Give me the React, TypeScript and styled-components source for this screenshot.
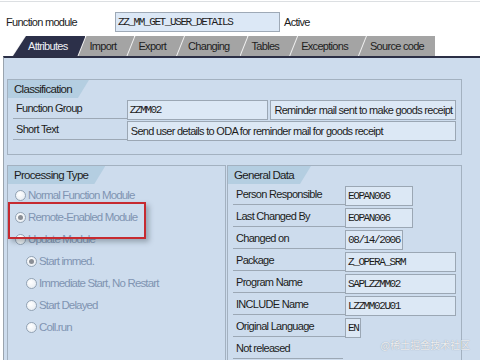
import React from "react";
import styled, { createGlobalStyle } from "styled-components";

const Global = createGlobalStyle`
  html, body { margin: 0; padding: 0; background: #ffffff; }
  body {
    font-family: "Liberation Sans", Arial, sans-serif;
    font-size: 11px;
    letter-spacing: -0.7px;
    color: #1c1c1c;
  }
  * { box-sizing: border-box; }
`;

const Page = styled.div`
  position: relative;
  width: 480px;
  height: 360px;
  overflow: hidden;
  background: #ffffff;
  display: flex;
  flex-direction: column;
`;

const TopBar = styled.div`
  margin-top: 1px;
  border-top: 1px solid #dcdfe2;
  padding: 10px 0 4px 6px;
  display: flex;
  align-items: center;
`;

const TopLabel = styled.div`
  width: 109px;
  line-height: 20px;
`;

const TopInput = styled.div`
  width: 165px;
  height: 20px;
  border: 1px solid #9ea9b6;
  background: #dce8f6;
  padding-left: 2px;
  font-family: "Liberation Mono", "DejaVu Sans Mono", monospace;
  font-size: 11px;
  letter-spacing: -1.4px;
  line-height: 18px;
`;

const Status = styled.div`
  margin-left: 4px;
`;

const TabStrip = styled.div`
  display: flex;
  height: 20px;
  padding-left: 12px;
`;

const TabOuter = styled.div<{ $slant: number; $first?: boolean }>`
  position: relative;
  height: 20px;
  margin-left: ${(p) => (p.$first ? 0 : -8)}px;
  background: #f4f4f4;
  clip-path: polygon(${(p) => p.$slant}px 0, 100% 0, 100% 100%, 0 100%);
`;

const TabFace = styled.div<{ $slant: number; $active?: boolean; $last?: boolean }>`
  height: 100%;
  display: flex;
  align-items: center;
  padding: 0 ${(p) => (p.$last ? 11 : 18)}px 0 ${(p) => (p.$active ? 16 : 12)}px;
  background: ${(p) => (p.$active ? "#2c3049" : "#a4a4a4")};
  color: ${(p) => (p.$active ? "#eef0f5" : "#1e1e1e")};
  clip-path: polygon(${(p) => p.$slant + 1}px 0, 100% 0, 100% 100%, 1px 100%);
  white-space: nowrap;
`;

const Panel = styled.div`
  flex: 1;
  margin-left: 3px;
  border-top: 2px solid #2b2f46;
  border-left: 1px solid #9aa4ae;
  background: #cddced;
  padding: 21px 0 0 3px;
  display: flex;
  flex-direction: column;
`;

const Box = styled.div<{ $width: number; $grow?: boolean }>`
  position: relative;
  width: ${(p) => p.$width}px;
  border: 1px solid #a3b1c0;
  display: flex;
  flex-direction: column;
  ${(p) => (p.$grow ? "height: 220px;" : "")}
`;

const BoxHeader = styled.div`
  align-self: flex-start;
  height: 18px;
  line-height: 18px;
  padding: 0 17px 0 6px;
  background: #b4cee1;
  clip-path: polygon(0 0, 100% 0, calc(100% - 11px) 100%, 0 100%);
  white-space: nowrap;
  font-size: 11.5px;
`;

const ClassBody = styled.div`
  padding: 1px 5px 13px 5px;
  display: flex;
  flex-direction: column;
`;

const FormRow = styled.div`
  display: flex;
  align-items: flex-start;
  height: 21px;
`;

const GDRow = styled(FormRow)`
  height: 22px;
`;

const LabelCell = styled.div<{ $w: number }>`
  width: ${(p) => p.$w}px;
  height: 20px;
  line-height: 19px;
  padding-left: 3px;
  border-bottom: 1px solid #9ca8b5;
  white-space: nowrap;
`;

const Field = styled.div<{ $w: number; $mono?: boolean; $gap?: number }>`
  width: ${(p) => p.$w}px;
  height: 20px;
  margin-top: 1px;
  margin-left: ${(p) => p.$gap ?? 0}px;
  border: 1px solid #9ba7b4;
  background: #dce8f5;
  padding-left: ${(p) => (p.$mono ? 2 : 3)}px;
  line-height: 18px;
  white-space: nowrap;
  overflow: hidden;
  ${(p) =>
    p.$mono
      ? `font-family: "Liberation Mono", "DejaVu Sans Mono", monospace; font-size: 11px; letter-spacing: -1.4px;`
      : ""}
`;

const Lower = styled.div`
  display: flex;
  gap: 1px;
  margin-top: 10px;
`;

const RadioList = styled.div`
  display: flex;
  flex-direction: column;
  padding-left: 7px;
`;

const RadioRow = styled.div<{ $indent?: boolean }>`
  display: flex;
  align-items: center;
  height: 22px;
  padding-left: ${(p) => (p.$indent ? 11 : 0)}px;
  color: #8094b2;
  white-space: nowrap;
  font-size: 11.5px;
  letter-spacing: -0.85px;
`;

const RadioCircle = styled.span<{ $checked?: boolean }>`
  width: 11px;
  height: 11px;
  border-radius: 50%;
  border: 1px solid #93a3b4;
  background: radial-gradient(circle at 40% 35%, #ffffff, #e2e8ef);
  margin-right: 2px;
  display: flex;
  align-items: center;
  justify-content: center;
  &::after {
    content: "";
    width: 5px;
    height: 5px;
    border-radius: 50%;
    background: ${(p) => (p.$checked ? "#8b8f96" : "transparent")};
  }
`;

const Highlight = styled.div`
  position: absolute;
  left: 0;
  top: 36px;
  width: 138px;
  height: 37px;
  border: 2px solid #c62a30;
  box-shadow: 3px 3px 5px rgba(50, 60, 70, 0.35);
  pointer-events: none;
`;

const GDBody = styled.div`
  padding: 1px 0 0 5px;
  display: flex;
  flex-direction: column;
`;

const Watermark = styled.div`
  position: absolute;
  right: 10px;
  bottom: 8px;
  font-family: "Noto Sans CJK SC", "Noto Sans", sans-serif;
  font-size: 10px;
  letter-spacing: 0;
  color: rgba(255, 255, 255, 0.85);
  text-shadow: 0 0 1px rgba(0, 0, 0, 0.35);
  white-space: nowrap;
`;

const tabs = ["Attributes", "Import", "Export", "Changing", "Tables", "Exceptions", "Source code"];

const radios: { label: string; checked?: boolean; indent?: boolean }[] = [
  { label: "Normal Function Module" },
  { label: "Remote-Enabled Module", checked: true },
  { label: "Update Module" },
  { label: "Start immed.", checked: true, indent: true },
  { label: "Immediate Start, No Restart", indent: true },
  { label: "Start Delayed", indent: true },
  { label: "Coll.run", indent: true },
];

const general: { label: string; value?: string; w?: number }[] = [
  { label: "Person Responsible", value: "EOPAN006", w: 68 },
  { label: "Last Changed By", value: "EOPAN006", w: 68 },
  { label: "Changed on", value: "08/14/2006", w: 58 },
  { label: "Package", value: "Z_OPERA_SRM", w: 111 },
  { label: "Program Name", value: "SAPLZZMM02", w: 111 },
  { label: "INCLUDE Name", value: "LZZMM02U01", w: 111 },
  { label: "Original Language", value: "EN", w: 16 },
  { label: "Not released" },
];

export default function App() {
  return (
    <Page>
      <Global />
      <TopBar>
        <TopLabel>Function module</TopLabel>
        <TopInput>ZZ_MM_GET_USER_DETAILS</TopInput>
        <Status>Active</Status>
      </TopBar>
      <TabStrip>
        {tabs.map((t, i) => {
          const active = i === 0;
          const slant = active ? 13 : 8;
          return (
            <TabOuter key={t} $slant={slant} $first={i === 0}>
              <TabFace $slant={slant} $active={active} $last={i === tabs.length - 1}>
                {t}
              </TabFace>
            </TabOuter>
          );
        })}
      </TabStrip>
      <Panel>
        <Box $width={455}>
          <BoxHeader>Classification</BoxHeader>
          <ClassBody>
            <FormRow>
              <LabelCell $w={114}>Function Group</LabelCell>
              <Field $w={142} $mono>
                ZZMM02
              </Field>
              <Field $w={186} $gap={2}>
                Reminder mail sent to make goods receipt
              </Field>
            </FormRow>
            <FormRow>
              <LabelCell $w={114}>Short Text</LabelCell>
              <Field $w={330}>Send user details to ODA for reminder mail for goods receipt</Field>
            </FormRow>
          </ClassBody>
        </Box>
        <Lower>
          <Box $width={219} $grow>
            <BoxHeader>Processing Type</BoxHeader>
            <RadioList>
              {radios.map((r) => (
                <RadioRow key={r.label} $indent={r.indent}>
                  <RadioCircle $checked={r.checked} />
                  {r.label}
                </RadioRow>
              ))}
            </RadioList>
            <Highlight />
          </Box>
          <Box $width={235} $grow>
            <BoxHeader>General Data</BoxHeader>
            <GDBody>
              {general.map((g) => (
                <GDRow key={g.label}>
                  <LabelCell $w={g.value ? 112 : 110}>{g.label}</LabelCell>
                  {g.value && (
                    <Field $w={g.w ?? 68} $mono>
                      {g.value}
                    </Field>
                  )}
                </GDRow>
              ))}
            </GDBody>
          </Box>
        </Lower>
      </Panel>
      <Watermark>@稀土掘金技术社区</Watermark>
    </Page>
  );
}
